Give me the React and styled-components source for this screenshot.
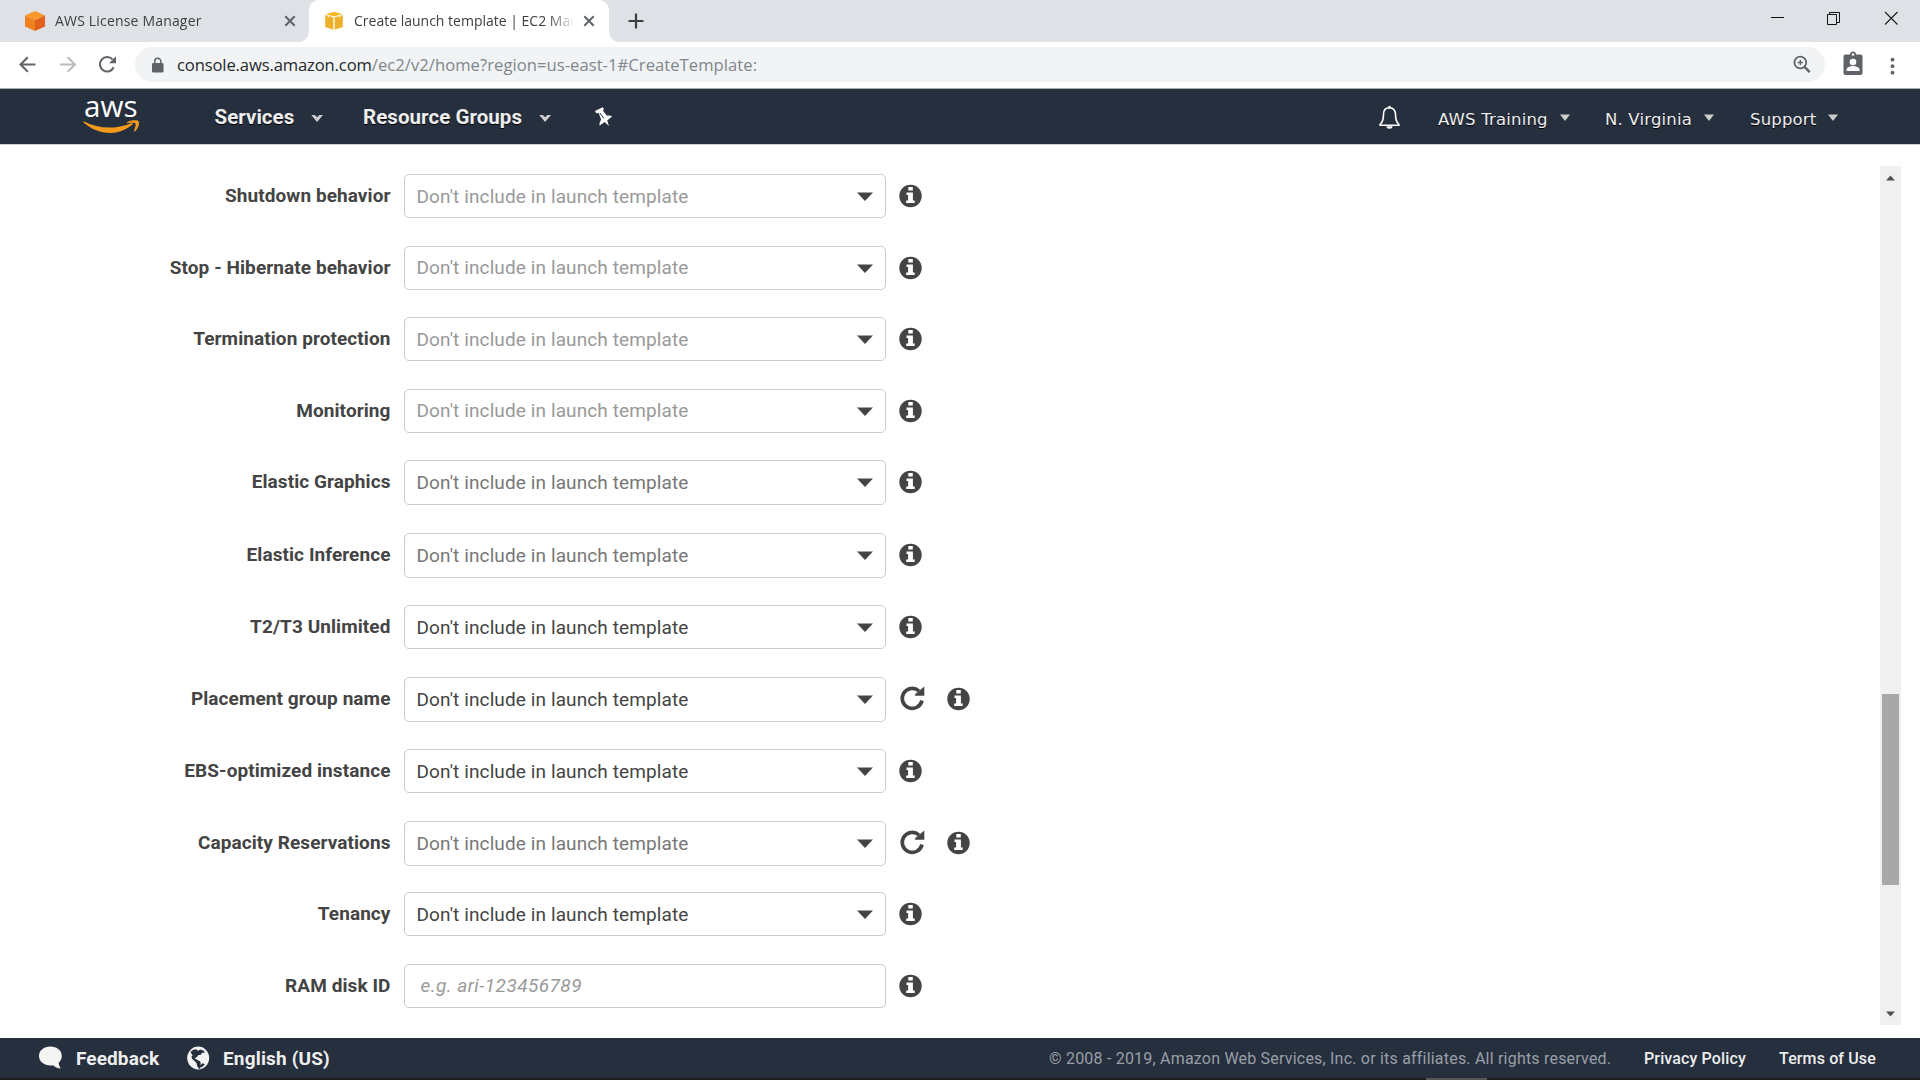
import React from "react";
import styled, { createGlobalStyle } from "styled-components";

const GlobalStyle = createGlobalStyle`
  * { box-sizing: border-box; }
  html, body { margin: 0; padding: 0; }
  body { width: 1920px; height: 1080px; overflow: hidden; background: #fff; font-family: Roboto, "Liberation Sans", sans-serif; }
  svg { display: block; flex: none; overflow: visible; }
`;

const Window = styled.div`
  width: 1920px;
  height: 1080px;
  display: flex;
  flex-direction: column;
  overflow: hidden;
  background: #fff;
`;

/* ---------- browser chrome ---------- */
const TabStrip = styled.div`
  flex: none;
  height: 42px;
  display: flex;
  background: #dee1e6;
`;
const Tab = styled.div`
  position: relative;
  width: ${(p) => (p.$active ? 300 : 309)}px;
  height: 42px;
  padding-left: ${(p) => (p.$active ? 15 : 24)}px;
  display: flex;
  align-items: flex-start;
  background: ${(p) => (p.$active ? "#fff" : "transparent")};
  border-radius: 10px 10px 0 0;
  &::before, &::after {
    content: "";
    display: ${(p) => (p.$active ? "block" : "none")};
    position: absolute;
    bottom: 0;
    width: 10px;
    height: 10px;
  }
  &::before { left: -10px; background: radial-gradient(circle at 0 0, transparent 9.5px, #fff 10px); }
  &::after { right: -10px; background: radial-gradient(circle at 100% 0, transparent 9.5px, #fff 10px); }
`;
const Favicon = styled.div`
  width: 22px;
  margin-top: 10px;
`;
const TabTitle = styled.div`
  width: 219px;
  margin-left: ${(p) => (p.$active ? 8 : 9)}px;
  overflow: hidden;
  white-space: nowrap;
  font: 14px/41px "Open Sans", "Noto Sans", sans-serif;
  letter-spacing: ${(p) => (p.$active ? "0" : "0.18px")};
  color: #3c4043;
  -webkit-mask-image: linear-gradient(90deg, #000 194px, transparent 221px);
  mask-image: linear-gradient(90deg, #000 194px, transparent 221px);
`;
const TabClose = styled.div`
  margin: 15px 0 0 10px;
`;
const NewTab = styled.div`
  margin: 13px 0 0 20px;
`;
const WindowControls = styled.div`
  margin: 11px 21px 0 auto;
  display: flex;
  gap: 44px;
`;
const Toolbar = styled.div`
  flex: none;
  height: 47px;
  padding: 5px 18px 0 17px;
  display: flex;
  background: #fff;
  border-bottom: 1px solid #a9abae;
`;
const NavButtons = styled.div`
  width: 118px;
  padding-top: 8px;
  display: flex;
  gap: 18px;
`;
const Omnibox = styled.div`
  width: 1690px;
  height: 35px;
  padding: 0 14px 0 16px;
  display: flex;
  align-items: center;
  background: #f1f3f4;
  border-radius: 18px;
`;
const Url = styled.div`
  flex: 1;
  margin-left: 11px;
  white-space: nowrap;
  font: 16.6px/34px "Open Sans", "Noto Sans", sans-serif;
  color: #25282b;
  letter-spacing: -0.13px;
`;
const UrlPath = styled.span`
  color: #80868b;
  letter-spacing: 0.05px;
`;
const Badge = styled.div`
  margin: 4px 0 0 18px;
`;
const Kebab = styled.div`
  margin: 10px 0 0 auto;
  width: 12px;
`;

/* ---------- console header ---------- */
const Header = styled.div`
  flex: none;
  height: 56px;
  padding-left: 83px;
  display: flex;
  background: #262f3e;
  border-bottom: 1px solid #cfcfcf;
`;
const HeaderMain = styled.div`
  margin-left: ${(p) => p.$gap}px;
  width: ${(p) => p.$w}px;
  white-space: nowrap;
  font-size: 20.5px;
  font-weight: 700;
  line-height: 56px;
  letter-spacing: ${(p) => p.$ls}px;
  color: #eee;
  text-shadow: 0 1px 0 #000;
`;
const HeaderLink = styled.div`
  margin-left: ${(p) => p.$gap}px;
  width: ${(p) => p.$w}px;
  white-space: nowrap;
  font: 16.5px/61px "DejaVu Sans", sans-serif;
  letter-spacing: 0.18px;
  color: #eee;
  text-shadow: 0 1px 0 #000;
`;
const Glyph = styled.div`
  margin: ${(p) => p.$top}px 0 0 ${(p) => p.$gap || 0}px;
`;

/* ---------- form ---------- */
const Content = styled.div`
  flex: none;
  height: 893px;
  display: flex;
  justify-content: space-between;
  padding: 21px 19px 0 0;
`;
const Form = styled.div`
  padding-top: 8px;
`;
const Row = styled.div`
  height: ${(p) => p.$pitch}px;
  display: flex;
  align-items: flex-start;
`;
const Label = styled.label`
  width: 390.5px;
  margin-right: 13.5px;
  text-align: right;
  white-space: nowrap;
  font-size: 19px;
  font-weight: 700;
  line-height: 43px;
  letter-spacing: 0.08px;
  color: #444;
`;
const tones = { light: "#999", mid: "#777", dark: "#444" };
const Select = styled.div`
  width: 482px;
  height: ${(p) => p.$h}px;
  padding: 0 12px 0 11.5px;
  display: flex;
  justify-content: space-between;
  align-items: flex-start;
  border: 1px solid #ccc;
  border-radius: 5px;
  background: #fff;
`;
const SelectText = styled.div`
  white-space: nowrap;
  font-size: 19px;
  line-height: ${(p) => (p.$raised ? 41 : 43)}px;
  letter-spacing: 0.11px;
  color: ${(p) => tones[p.$tone]};
`;
const Caret = styled.div`
  margin-top: 17px;
`;
const Input = styled.input`
  width: 482px;
  height: 44px;
  padding: 0 15.5px 1px;
  border: 1px solid #ccc;
  border-radius: 5px;
  font: italic 19px Roboto, "Liberation Sans", sans-serif;
  letter-spacing: 0.44px;
  outline: none;
  &::placeholder { color: #999; opacity: 1; }
`;
const Refresh = styled.div`
  margin: 9px 9px 0 14px;
`;
const Info = styled.div`
  margin: 11px 0 0 13px;
`;
const Scrollbar = styled.div`
  width: 21px;
  height: 859px;
  padding: 9px 2px 8px;
  display: flex;
  flex-direction: column;
  align-items: center;
  background: #f0f0f0;
`;
const Thumb = styled.div`
  width: 17px;
  height: 191px;
  margin: 513px 0 auto;
  background: #a8a8a8;
`;

/* ---------- footer ---------- */
const Footer = styled.div`
  flex: none;
  height: 40px;
  padding-left: 38px;
  display: flex;
  background: #262f3e;
  white-space: nowrap;
`;
const FooterStrong = styled.div`
  width: ${(p) => p.$w}px;
  margin-left: 13px;
  font-size: 19px;
  font-weight: 700;
  line-height: 41px;
  letter-spacing: ${(p) => p.$ls}px;
  color: #eee;
`;
const Copyright = styled.div`
  margin-left: auto;
  width: 595px;
  font-size: 16px;
  line-height: 41px;
  letter-spacing: 0.205px;
  color: #999fa6;
`;
const FooterLink = styled.div`
  width: ${(p) => p.$w}px;
  font-size: 16px;
  font-weight: 500;
  line-height: 41px;
  letter-spacing: 0.13px;
  color: #eee;
`;
const Taskbar = styled.div`
  flex: none;
  height: 2px;
  padding-left: 1426px;
  background: #1e1e1e;
`;
const TaskbarItem = styled.div`
  width: 61px;
  height: 2px;
  background: #555;
`;

/* ---------- drawings ---------- */
const OrangeCube = () => (
  <svg width="22" height="22" viewBox="0 0 22 22">
    <path d="M11 1 21 5.6 11 10.2 1 5.6Z" fill="#f8982c" />
    <path d="M1 5.6 11 10.2V21L1 16.6Z" fill="#f0811f" />
    <path d="M21 5.6 11 10.2V21l10-4.4Z" fill="#e2601b" />
  </svg>
);
const YellowCube = () => (
  <svg width="22" height="22" viewBox="0 0 22 22">
    <path d="M1.200 4.800 10 7v13L1.200 16.900Z" fill="#eeb02b" />
    <path d="M18.800 4.800 10 7v13l8.800-3.100Z" fill="#eeb02b" />
    <path d="M1.200 4.300 10 1.800l8.800 2.500L10 6.700Z" fill="#f7b826" />
    <path d="M1.200 4.600 10 7l8.800-2.400" fill="none" stroke="#fff" strokeWidth=".9" />
    <path d="M10 7.200V20" stroke="#fdf2cf" strokeWidth="1.700" />
    <path d="M4.300 5.700v1.800M15.800 5.700v1.800" stroke="#fdf2cf" strokeWidth="1.200" />
  </svg>
);
const Cross = () => (
  <svg width="11" height="12" viewBox="0 0 11 12">
    <path d="M1.300 1.300 10.700 10.700M10.700 1.300 1.300 10.700" stroke="#5f6368" strokeWidth="2" />
  </svg>
);
const Plus = () => (
  <svg width="15" height="16" viewBox="0 0 15 16">
    <path d="M7 .5v15M-.5 8h15" stroke="#3c4043" strokeWidth="2.200" />
  </svg>
);
const Minimise = () => (
  <svg width="13" height="14" viewBox="0 0 13 14"><path d="M0 6.500h13" stroke="#111" /></svg>
);
const Restore = () => (
  <svg width="13" height="14" viewBox="0 0 13 14" fill="none" stroke="#111">
    <path d="M-.5 3.500h9v10h-9zM1.500 3.500v-2h10v10h-3" />
  </svg>
);
const CloseWindow = () => (
  <svg width="14" height="14" viewBox="0 0 14 14"><path d="M0 1 12.500 13.500M12.500 1 0 13.500" stroke="#222" strokeWidth="1.200" /></svg>
);
const Arrow = ({ forward }) => (
  <svg width="22" height="18" viewBox="0 0 22 18" fill="none" stroke={forward ? "#babcbe" : "#5f6368"} strokeWidth="2">
    <path d={forward ? "M3 9.500h15M10.700 2.200 18 9.500l-7.300 7.300" : "M18.500 9.500h-15M10.800 2.200 3.500 9.500l7.300 7.300"} />
  </svg>
);
const Reload = () => (
  <svg width="20" height="18" viewBox="0 0 20 18">
    <path d="M16.700 12.300A7.200 7.200 0 1 1 15.500 4.400" fill="none" stroke="#5f6368" strokeWidth="2.100" />
    <path d="M19 1.200v7h-7z" fill="#5f6368" />
  </svg>
);
const Lock = () => (
  <svg width="15" height="16" viewBox="0 0 15 16">
    <rect x="1" y="6" width="11.500" height="9.500" rx="1.300" fill="#5f6368" />
    <path d="M3.800 7V4.300a3 3 0 0 1 6 0V7" fill="none" stroke="#5f6368" strokeWidth="1.500" />
  </svg>
);
const Magnifier = () => (
  <svg width="18" height="19" viewBox="0 0 18 19" fill="none" stroke="#5f6368">
    <circle cx="7.300" cy="7.500" r="5.900" strokeWidth="1.800" />
    <path d="m11.500 11.900 5.200 5.200" strokeWidth="2.400" />
    <path d="M7.300 4.800v5.400M4.600 7.500H10" strokeWidth="1.300" />
  </svg>
);
const ProfileBadge = () => (
  <svg width="20" height="25" viewBox="0 0 20 25">
    <rect x=".5" y="3.500" width="19" height="20.500" rx="2" fill="#5f6368" />
    <circle cx="10" cy="3.500" r="3" fill="#5f6368" />
    <circle cx="10" cy="3.500" r="1.300" fill="#fff" />
    <circle cx="10" cy="11" r="3.300" fill="#fff" />
    <path d="M3.500 20v-1.300c0-2.300 4-3.600 6.500-3.600s6.500 1.300 6.500 3.600V20z" fill="#fff" />
  </svg>
);
const Dots = () => (
  <svg width="6" height="20" viewBox="0 0 6 20" fill="#5f6368">
    <circle cx="2.500" cy="2.700" r="1.900" /><circle cx="2.500" cy="9.200" r="1.900" /><circle cx="2.500" cy="15.700" r="1.900" />
  </svg>
);
const AwsLogo = () => (
  <svg width="57" height="55" viewBox="0 0 57 55">
    <text x="1" y="27.700" fill="#fff" fontFamily="'Open Sans','Noto Sans',sans-serif" fontSize="29.500" fontWeight="500" textLength="53.500" lengthAdjust="spacingAndGlyphs">aws</text>
    <path d="M.4 33.300c-.5-.5 0-1.200.8-.8 14.500 7.400 30.600 8.200 46.800 1.700 1.400-.5 2.200.7 1 1.600C43.700 40.400 36.400 44 28 44 16.800 44 7 39.600.4 33.300Z" fill="#f49a1c" />
    <path d="M44 33.200c3.200-2.100 8.800-2.300 11-1.500 2 .8 1 7.200-3 10.500-.7.500-1.300.2-1-.5 1-2.500 2.200-6 1.500-7.100-.8-1.200-5.300-.8-7.900-.5-.8.100-1.200-.5-.6-.9Z" fill="#f49a1c" />
  </svg>
);
const Chevron = () => (
  <svg width="13" height="9" viewBox="0 0 13 9">
    <path d="M.2 1h3.600l2.300 2.300L8.400 1H12L6.100 7.900Z" fill="#ccc" />
  </svg>
);
const SmallCaret = () => (
  <svg width="10" height="8" viewBox="0 0 10 8"><path d="M0 .5h10L5 7Z" fill="#ccc" /></svg>
);
const Pin = () => (
  <svg width="19" height="21" viewBox="0 0 19 21">
    <path d="M0 5 7.700 1.300l1.300 2-1.200 1.300 4.200 5.200c2-.6 3.800-.3 5 .7l-4.800 4 1.800 5.500-4.300-4-5 3.500c-.6-2 0-4 1.500-5.800L3.700 6.900l-2.400.3Z" fill="#fff" />
    <path d="m5 7 3.700 5.300" stroke="#262f3e" strokeWidth="1" />
  </svg>
);
const Bell = () => (
  <svg width="22" height="25" viewBox="0 0 22 25">
    <path d="M10.500 2.700c-4.200 0-6 3-6 6.600 0 5.300-.7 8-3.400 10v1h18.800v-1c-2.700-2-3.400-4.700-3.400-10 0-3.600-1.800-6.600-6-6.600Z" fill="none" stroke="#fff" strokeWidth="1.600" />
    <circle cx="10.500" cy="2.200" r="1.500" fill="#fff" />
    <path d="M7.500 21.300h6a3 2.500 0 0 1-6 0Z" fill="#fff" />
  </svg>
);
const SelectCaret = () => (
  <svg width="16" height="10" viewBox="0 0 16 10"><path d="M0 .5h16L8 9Z" fill="#444" /></svg>
);
const InfoIcon = () => (
  <svg width="23" height="23" viewBox="0 0 23 23">
    <circle cx="11.500" cy="11" r="11.200" fill="#444" />
    <path d="M9.300 2h4.500v3.400H9.300zM7.500 7.500h6.400v7.900h1.800v2.500H7.200v-2.500h1.900V10H7.500z" fill="#fff" />
  </svg>
);
const RefreshIcon = () => (
  <svg width="25" height="25" viewBox="0 0 25 25">
    <path d="M22 14.500A10 10 0 1 1 19 5" fill="none" stroke="#444" strokeWidth="3.600" />
    <path d="M24.300.5V9.700h-9.200V8.200Z" fill="#444" />
  </svg>
);
const Bubble = () => (
  <svg width="25" height="25" viewBox="0 0 25 25">
    <path d="M12.500.6C19 .6 23.800 4.500 23.800 10c0 2.600-1.200 5-3.100 6.700.2 2.400.9 4.200 2.200 5.800-3.500-.3-6-1.500-7.800-3.300-.8.200-1.700.2-2.600.2C6 19.400 1 15.500 1 10S6 .6 12.500.6Z" fill="#f4f4f4" />
  </svg>
);
const Globe = () => (
  <svg width="23" height="24" viewBox="0 0 23 24">
    <ellipse cx="11.200" cy="12" rx="11" ry="11.400" fill="#f2f2f2" />
    <path d="M3.500 6C4.800 4.400 7 3.300 9 3.200l2 1.500 2.500-1.200 3.600 1.400.6 1.900-2.700 0-1.200 1.900-2.800.5-1.100 1.700-2.300 1.300 2.500 1.500 2.800 1.600.9 1.800-.9 2.300.7 2.700-1.200.9-2.200-2.800-.6-3-2-2.200-2.400-1.900-.8-2.700 1.200-.9Z" fill="#262f3e" />
    <path d="m13 19 2.800-1.800 2.100 1.200-2.800 2.600-2 .3Z" fill="#262f3e" />
  </svg>
);

const TEXT = "Don't include in launch template";
const rows = [
  { label: "Shutdown behavior", pitch: 72, h: 44, tone: "light" },
  { label: "Stop - Hibernate behavior", pitch: 71, h: 44, tone: "light", raised: true },
  { label: "Termination protection", pitch: 72, h: 44, tone: "light" },
  { label: "Monitoring", pitch: 71, h: 44, tone: "light", raised: true },
  { label: "Elastic Graphics", pitch: 73, h: 45, tone: "mid" },
  { label: "Elastic Inference", pitch: 72, h: 45, tone: "mid" },
  { label: "T2/T3 Unlimited", pitch: 72, h: 44, tone: "dark" },
  { label: "Placement group name", pitch: 72, h: 45, tone: "dark", refresh: true },
  { label: "EBS-optimized instance", pitch: 72, h: 44, tone: "dark" },
  { label: "Capacity Reservations", pitch: 71, h: 45, tone: "mid", refresh: true },
  { label: "Tenancy", pitch: 72, h: 44, tone: "dark" },
  { label: "RAM disk ID", pitch: 72, h: 44, placeholder: "e.g. ari-123456789" },
];

function FormRow({ row }) {
  return (
    <Row $pitch={row.pitch}>
      <Label>{row.label}</Label>
      {row.placeholder ? (
        <Input placeholder={row.placeholder} />
      ) : (
        <Select $h={row.h}>
          <SelectText $tone={row.tone} $raised={row.raised}>{TEXT}</SelectText>
          <Caret><SelectCaret /></Caret>
        </Select>
      )}
      {row.refresh && <Refresh><RefreshIcon /></Refresh>}
      <Info><InfoIcon /></Info>
    </Row>
  );
}

export default function App() {
  return (
    <Window>
      <GlobalStyle />
      <TabStrip>
        <Tab>
          <Favicon><OrangeCube /></Favicon>
          <TabTitle>AWS License Manager</TabTitle>
          <TabClose><Cross /></TabClose>
        </Tab>
        <Tab $active>
          <Favicon><YellowCube /></Favicon>
          <TabTitle $active>Create launch template | EC2 Man</TabTitle>
          <TabClose><Cross /></TabClose>
        </Tab>
        <NewTab><Plus /></NewTab>
        <WindowControls>
          <Minimise />
          <Restore />
          <CloseWindow />
        </WindowControls>
      </TabStrip>
      <Toolbar>
        <NavButtons>
          <Arrow />
          <Arrow forward />
          <Reload />
        </NavButtons>
        <Omnibox>
          <Lock />
          <Url>console.aws.amazon.com<UrlPath>/ec2/v2/home?region=us-east-1#CreateTemplate:</UrlPath></Url>
          <Magnifier />
        </Omnibox>
        <Badge><ProfileBadge /></Badge>
        <Kebab><Dots /></Kebab>
      </Toolbar>
      <Header>
        <AwsLogo />
        <HeaderMain $gap={74.5} $w={96.5} $ls={0.03}>Services</HeaderMain>
        <Glyph $top={25}><Chevron /></Glyph>
        <HeaderMain $gap={39} $w={176} $ls={0.05}>Resource Groups</HeaderMain>
        <Glyph $top={25}><Chevron /></Glyph>
        <Glyph $top={17} $gap={43}><Pin /></Glyph>
        <Glyph $top={16} $gap={765}><Bell /></Glyph>
        <HeaderLink $gap={37} $w={122}>AWS Training</HeaderLink>
        <Glyph $top={25}><SmallCaret /></Glyph>
        <HeaderLink $gap={35} $w={99}>N. Virginia</HeaderLink>
        <Glyph $top={25}><SmallCaret /></Glyph>
        <HeaderLink $gap={36} $w={78}>Support</HeaderLink>
        <Glyph $top={25}><SmallCaret /></Glyph>
      </Header>
      <Content>
        <Form>
          {rows.map((row) => <FormRow key={row.label} row={row} />)}
        </Form>
        <Scrollbar>
          <svg width="9" height="6" viewBox="0 0 9 6"><path d="M0 5.500 4.500.5 9 5.500Z" fill="#505050" /></svg>
          <Thumb />
          <svg width="9" height="6" viewBox="0 0 9 6"><path d="M0 .5 4.500 5.500 9 .5Z" fill="#505050" /></svg>
        </Scrollbar>
      </Content>
      <Footer>
        <Glyph $top={8}><Bubble /></Glyph>
        <FooterStrong $w={97} $ls={0.1}>Feedback</FooterStrong>
        <Glyph $top={8} $gap={14}><Globe /></Glyph>
        <FooterStrong $w={120} $ls={0.17}>English (US)</FooterStrong>
        <Copyright>© 2008 - 2019, Amazon Web Services, Inc. or its affiliates. All rights reserved.</Copyright>
        <FooterLink $w={135}>Privacy Policy</FooterLink>
        <FooterLink $w={141}>Terms of Use</FooterLink>
      </Footer>
      <Taskbar><TaskbarItem /></Taskbar>
    </Window>
  );
}
